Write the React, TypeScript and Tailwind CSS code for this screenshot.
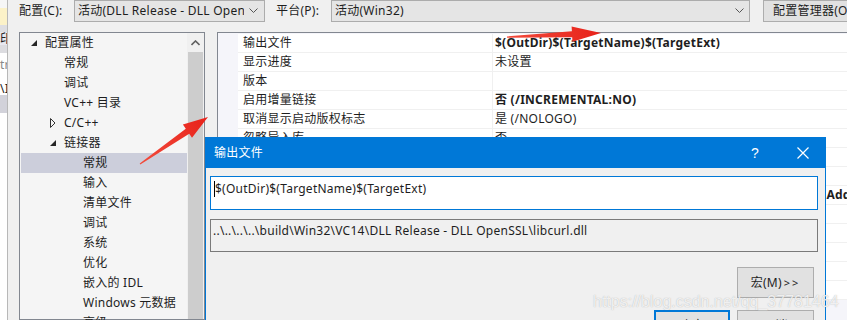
import React from "react";

const FONT = "font-['Noto_Sans','Noto_Sans_CJK_SC',sans-serif] tracking-[0.25px]";

type TreeItem = { t: string; lvl: 0 | 1 | 2; icon?: "open" | "closed"; sel?: boolean };

const tree: TreeItem[] = [
  { t: "配置属性", lvl: 0, icon: "open" },
  { t: "常规", lvl: 1 },
  { t: "调试", lvl: 1 },
  { t: "VC++ 目录", lvl: 1 },
  { t: "C/C++", lvl: 1, icon: "closed" },
  { t: "链接器", lvl: 1, icon: "open" },
  { t: "常规", lvl: 2, sel: true },
  { t: "输入", lvl: 2 },
  { t: "清单文件", lvl: 2 },
  { t: "调试", lvl: 2 },
  { t: "系统", lvl: 2 },
  { t: "优化", lvl: 2 },
  { t: "嵌入的 IDL", lvl: 2 },
  { t: "Windows 元数据", lvl: 2 },
  { t: "高级", lvl: 2 },
];

const lvlPad = ["pl-[7px]", "pl-[26px]", "pl-[45px]"];

const props: { n: string; v: React.ReactNode; b?: boolean }[] = [
  { n: "输出文件", v: "$(OutDir)$(TargetName)$(TargetExt)", b: true },
  { n: "显示进度", v: "未设置" },
  { n: "版本", v: "" },
  { n: "启用增量链接", v: "否 (/INCREMENTAL:NO)", b: true },
  { n: "取消显示启动版权标志", v: "是 (/NOLOGO)" },
  { n: "忽略导入库", v: "否" },
  { n: "注册输出", v: "否" },
  { n: "逐用户重定向", v: "否" },
  {
    n: "附加库目录",
    v: (
      <>
        <span className="inline-block w-[316px] overflow-hidden align-top">..\..\..\..\deps\lib;..\..\..\..\..\openssl\lib;</span>
        %(AdditionalLibraryDirectories)
      </>
    ),
    b: true,
  },
  { n: "链接库依赖项", v: "是" },
  { n: "使用库依赖项输入", v: "否" },
  { n: "链接状态", v: "" },
  { n: "阻止 DLL 绑定", v: "" },
  { n: "将链接器警告视为错误", v: "" },
];

function OpenTri() {
  return (
    <svg width="6" height="6" viewBox="0 0 6 6">
      <polygon points="6,0 6,6 0,6" fill="#262626" />
    </svg>
  );
}
function ClosedTri() {
  return (
    <svg width="6" height="10" viewBox="0 0 6 10">
      <polygon points="0.5,0.5 5,5 0.5,9.5" fill="none" stroke="#333" strokeWidth="1" />
    </svg>
  );
}

function Chevron() {
  return (
    <svg width="9" height="6" viewBox="0 0 9 6" className="shrink-0">
      <polyline points="0.5,0.5 4.5,4.5 8.5,0.5" fill="none" stroke="#555" strokeWidth="1" />
    </svg>
  );
}

function LeftStrip() {
  return (
    <div className="w-[8px] shrink-0 flex flex-col border-r border-[#b8b8b8] overflow-hidden text-[12px] leading-[14px]">
      <div className="h-[8px] bg-[#f6f6f6]" />
      <div className="h-[17px] bg-[#fcf2c8]" />
      <div className="h-[7px] bg-[#dedee2]" />
      <div className="h-[13px] bg-[#e8e8f0] text-[#222] whitespace-nowrap">印</div>
      <div className="h-[8px] bg-[#dcdce0]" />
      <div className="h-[24px] bg-white text-[#888] pt-[5px] whitespace-nowrap">tr</div>
      <div className="h-[18px] bg-white text-[#222] pt-[5px] whitespace-nowrap">\I</div>
      <div className="h-[18px] bg-[#d2d2da]" />
      <div className="flex-1 bg-white" />
    </div>
  );
}

function TopRow() {
  return (
    <div className="h-[22px] flex items-center text-[12px] text-[#1e1e1e] leading-[16px]">
      <span className="ml-[11px] w-[55px] shrink-0 whitespace-nowrap">配置(C):</span>
      <div className="w-[191px] shrink-0 h-[22px] -mt-[1px] bg-[#e5e5e5] border border-[#acacac] flex items-center pl-[3px] pr-[6px]">
        <span className="flex-1 mr-[5px] whitespace-nowrap overflow-hidden">活动(DLL Release - DLL OpenSSL)</span>
        <Chevron />
      </div>
      <span className="ml-[11px] w-[55px] shrink-0 whitespace-nowrap">平台(P):</span>
      <div className="w-[419px] shrink-0 h-[22px] -mt-[1px] bg-[#e5e5e5] border border-[#acacac] flex items-center pl-[3px] pr-[5px]">
        <span className="flex-1 whitespace-nowrap">活动(Win32)</span>
        <Chevron />
      </div>
      <div className="ml-[13px] w-[110px] shrink-0 h-[22px] -mt-[1px] bg-[#e1e1e1] border border-[#adadad] flex items-center pl-[9px] whitespace-nowrap">
        配置管理器(O)...
      </div>
    </div>
  );
}

function Tree() {
  return (
    <div className="ml-[11px] w-[186px] shrink-0 border border-[#828790] bg-[#f5f5f5] flex text-[12px] text-[#1e1e1e]">
      <div className="flex-1 flex flex-col">
        {tree.map((it, i) => (
          <div
            key={i}
            className={`h-[20px] shrink-0 flex items-center whitespace-nowrap ${lvlPad[it.lvl]} ${it.sel ? "bg-[#cccedb] ml-[1px]" : ""}`}
          >
            <span className={`w-[18px] ${it.sel ? "-ml-[1px]" : ""} pl-[4px] flex items-center`}>
              {it.icon === "open" ? <OpenTri /> : it.icon === "closed" ? <ClosedTri /> : null}
            </span>
            <span className="leading-[16px]">{it.t}</span>
          </div>
        ))}
      </div>
      <div className="w-[17px] flex flex-col bg-[#f0f0f0]">
        <div className="h-[19px] flex items-center justify-center">
          <svg width="9" height="6" viewBox="0 0 9 6">
            <polyline points="0.5,5 4.5,1 8.5,5" fill="none" stroke="#606060" strokeWidth="1.6" />
          </svg>
        </div>
        <div className="flex-1 mx-[1px] bg-[#cdcdcd]" />
      </div>
    </div>
  );
}

function Grid() {
  return (
    <div className="ml-[12px] flex-1 min-w-0 overflow-hidden border-l border-t border-[#828790] bg-[#f5f5fa] pt-[1px] text-[12px] text-[#1e1e1e]">
      {props.map((p, i) => (
        <div key={i} className="h-[19px] flex pl-[20px]">
          <div className="w-[254px] shrink-0 bg-white border-b border-[#f0f0f0] pl-[5px] flex items-center leading-[16px] whitespace-nowrap">
            {p.n}
          </div>
          <div
            className={`flex-1 min-w-0 bg-white border-b border-l border-[#f0f0f0] pl-[2px] flex items-center leading-[16px] whitespace-nowrap overflow-hidden ${p.b ? "font-bold" : ""}`}
          >
            <span className="whitespace-nowrap">{p.v}</span>
          </div>
        </div>
      ))}
    </div>
  );
}

function Dialog() {
  return (
    <div className="absolute left-[205px] top-[137px] w-[621px] h-[200px] border border-[#0078d7] bg-[#f0f0f0] flex flex-col text-[12px] text-[#1e1e1e]">
      <div className="h-[30px] shrink-0 bg-[#0078d7] flex items-center text-white">
        <span className="ml-[8px] flex-1 leading-[16px]">输出文件</span>
        <span className="w-[12px] text-[14px] leading-[16px] font-['Liberation_Sans',sans-serif] mr-[34px]">?</span>
        <svg width="12" height="12" viewBox="0 0 12 12" className="mr-[16px]">
          <path d="M0.5 0.5 L11.5 11.5 M11.5 0.5 L0.5 11.5" stroke="white" strokeWidth="1.2" />
        </svg>
      </div>
      <div className="pl-[4px] pr-[7px] flex flex-col">
        <div className="mt-[8px] h-[34px] bg-white border border-[#0078d7] pl-[3px] pt-[3px] flex items-start">
          <div className="flex items-center h-[18px]">
            <span className="w-[1px] h-[16px] bg-black" />
            <span className="leading-[18px] whitespace-nowrap">$(OutDir)$(TargetName)$(TargetExt)</span>
          </div>
        </div>
        <div className="mt-[9px] h-[33px] bg-[#f0f0f0] border border-[#7a7a7a] pl-[2px] pt-[2px] leading-[18px] whitespace-nowrap">
          ..\..\..\..\build\Win32\VC14\DLL Release - DLL OpenSSL\libcurl.dll
        </div>
        <div className="mt-[15px] pr-[4px] flex justify-end">
          <div className="w-[77px] h-[31px] bg-[#e1e1e1] border border-[#adadad] flex items-center justify-center leading-[16px]">
            宏(M)<span className="ml-[2px] tracking-[2px] text-[11px]">&gt;&gt;</span>
          </div>
        </div>
        <div className="mt-[12px] pr-[4px] flex justify-end gap-[7px]">
          <div className="w-[76px] h-[31px] bg-[#e1e1e1] border-2 border-[#0078d7] flex items-center justify-center leading-[16px]">
            确定
          </div>
          <div className="w-[77px] h-[31px] bg-[#e1e1e1] border border-[#adadad] flex items-center justify-center leading-[16px]">
            取消
          </div>
        </div>
      </div>
    </div>
  );
}

function Arrows() {
  return (
    <svg className="absolute left-0 top-0 pointer-events-none" width="847" height="320" viewBox="0 0 847 320">
      <defs>
        <linearGradient id="rg1" x1="140" y1="164" x2="208" y2="117" gradientUnits="userSpaceOnUse">
          <stop offset="0" stopColor="#f24b3c" />
          <stop offset="1" stopColor="#e8221a" />
        </linearGradient>
        <linearGradient id="rg2" x1="507" y1="37" x2="600" y2="33" gradientUnits="userSpaceOnUse">
          <stop offset="0" stopColor="#f24b3c" />
          <stop offset="1" stopColor="#e8221a" />
        </linearGradient>
      </defs>
      <polygon
        points="140.3,164.4 189.2,133.7 192.0,137.8 208,117 182.9,124.6 185.8,128.7 139.7,163.6"
        fill="url(#rg1)"
      />
      <polygon
        points="507,37.8 572.2,37.2 572.4,41.8 601,33 571.6,26.4 571.9,31.2 507,36.4"
        fill="url(#rg2)"
      />
    </svg>
  );
}

export default function App() {
  return (
    <div className={`relative w-[847px] h-[320px] overflow-hidden bg-[#f0f0f0] flex ${FONT}`}>
      <LeftStrip />
      <div className="flex-1 flex flex-col min-w-0">
        <TopRow />
        <div className="mt-[10px] flex flex-1 min-h-0">
          <Tree />
          <Grid />
        </div>
      </div>
      <Dialog />
      <Arrows />
      <div className="absolute left-[593px] top-[292px] text-[16px] leading-[20px] tracking-normal font-['Liberation_Sans',sans-serif] text-white/80 [text-shadow:0_0_1px_rgba(120,120,120,0.6)] whitespace-nowrap pointer-events-none">
        https://blog.csdn.net/qq_37781464
      </div>
    </div>
  );
}
